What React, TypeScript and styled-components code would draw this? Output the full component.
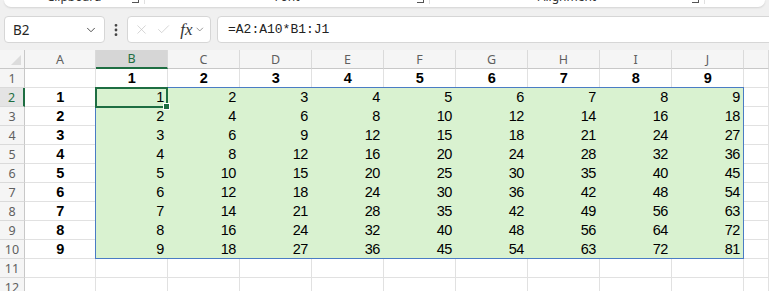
import styled, { createGlobalStyle } from 'styled-components';
import { ChevronDown, EllipsisVertical, X, Check } from 'lucide-react';

const GlobalStyle = createGlobalStyle`
  html, body {
    margin: 0;
    padding: 0;
    background: #ffffff;
    overflow: hidden;
  }
  body {
    font-family: "Noto Sans", "Liberation Sans", sans-serif;
  }
`;

const Page = styled.div`
  display: flex;
  flex-direction: column;
  width: 769px;
  background: #f0f0f0;
  & > * {
    flex: none;
  }
`;

const RibbonEdge = styled.div`
  margin: 0 4px;
  height: 7px;
  background: #ffffff;
  border-radius: 0 0 8px 8px;
  box-shadow: 0 1px 2px rgba(0, 0, 0, 0.12);
  display: flex;
  overflow: hidden;
`;

const RibbonGroup = styled.div<{ $w: number }>`
  width: ${(p) => p.$w}px;
  flex: none;
  display: flex;
  align-items: flex-end;
  justify-content: center;
  border-right: 1px solid #e0e0e0;
  margin-bottom: 3px;
  position: relative;
`;

const GroupLabel = styled.span`
  font-size: 12px;
  line-height: 12px;
  color: #333;
  margin-bottom: 1px;
`;

const Launcher = styled.span`
  position: absolute;
  right: 5px;
  bottom: 1px;
  width: 6px;
  height: 3px;
  border-right: 1px solid #555;
  border-bottom: 1px solid #555;
`;

const FormulaRow = styled.div`
  display: flex;
  align-items: flex-start;
  height: 43px;
  box-sizing: border-box;
  padding: 9px 0 0 4px;
`;

const Box = styled.div`
  box-sizing: border-box;
  height: 27px;
  background: #ffffff;
  border: 1px solid #d6d6d6;
  border-radius: 4px;
  display: flex;
  align-items: center;
`;

const NameBox = styled(Box)`
  width: 101px;
  padding: 0 6px 0 8px;
  justify-content: space-between;
  font-size: 13.5px;
  color: #262626;
`;

const Kebab = styled.div`
  width: 22px;
  height: 27px;
  display: flex;
  align-items: center;
  justify-content: center;
  color: #444;
`;

const Controls = styled(Box)`
  width: 84px;
  padding: 0 4px 0 6px;
  gap: 7px;
  color: #c4c4c4;
`;

const Fx = styled.span`
  font-family: "Liberation Serif", serif;
  font-style: italic;
  font-size: 17px;
  color: #333;
  margin-left: 2px;
  margin-right: -5px;
`;

const FormulaInput = styled(Box)`
  flex: 1;
  margin-left: 6px;
  margin-right: -10px;
  padding-left: 10px;
  font-family: "Liberation Mono", monospace;
  font-size: 13px;
  color: #222;
`;

const Sheet = styled.div`
  display: grid;
  grid-template-columns: 25px 71px repeat(9, 72px) 1fr;
  grid-auto-rows: 19px;
  background: #ffffff;
`;

const Corner = styled.div`
  grid-row: 1;
  grid-column: 1;
  background: #f5f5f5;
  border-right: 1px solid #c8c8c8;
  border-bottom: 1px solid #c8c8c8;
  position: relative;
  &::after {
    content: '';
    position: absolute;
    right: 3px;
    bottom: 3px;
    border-left: 10px solid transparent;
    border-bottom: 10px solid #dcdcdc;
  }
`;

const ColHead = styled.div<{ $col: number; $active?: boolean }>`
  grid-row: 1;
  grid-column: ${(p) => p.$col};
  box-sizing: border-box;
  display: flex;
  align-items: center;
  justify-content: center;
  font-size: 12.5px;
  color: ${(p) => (p.$active ? '#1e6e42' : '#5f5f5f')};
  background: ${(p) => (p.$active ? '#d6d6d6' : '#f5f5f5')};
  border-right: 1px solid #dadada;
  border-bottom: ${(p) => (p.$active ? '2px solid #1e6e42' : '1px solid #c8c8c8')};
`;

const RowHead = styled.div<{ $row: number; $active?: boolean }>`
  grid-row: ${(p) => p.$row};
  grid-column: 1;
  box-sizing: border-box;
  display: flex;
  align-items: center;
  justify-content: center;
  font-size: 12.5px;
  color: ${(p) => (p.$active ? '#1e6e42' : '#5f5f5f')};
  background: ${(p) => (p.$active ? '#e4e4e4' : '#f5f5f5')};
  border-bottom: 1px solid #dadada;
  border-right: ${(p) => (p.$active ? '2px solid #1e6e42' : '1px solid #c8c8c8')};
`;

const Cell = styled.div<{
  $row: number;
  $col: number;
  $align: 'left' | 'center' | 'right';
  $bold?: boolean;
  $fill?: string;
}>`
  grid-row: ${(p) => p.$row};
  grid-column: ${(p) => p.$col};
  box-sizing: border-box;
  display: flex;
  align-items: flex-end;
  justify-content: ${(p) =>
    p.$align === 'right' ? 'flex-end' : p.$align === 'center' ? 'center' : 'flex-start'};
  padding: 0 3px 0 3px;
  font-family: "Liberation Sans", Arial, sans-serif;
  font-size: 14.5px;
  line-height: 17px;
  letter-spacing: -0.4px;
  font-weight: ${(p) => (p.$bold ? 700 : 400)};
  color: #000;
  background: ${(p) => p.$fill ?? '#ffffff'};
  border-right: 1px solid ${(p) => p.$fill ?? '#e1e1e1'};
  border-bottom: 1px solid ${(p) => p.$fill ?? '#e1e1e1'};
`;

const SpillBorder = styled.div`
  grid-row: 3 / 12;
  grid-column: 3 / 12;
  margin: -1px 0 0 -1px;
  border: 1px solid #4a7cc4;
  pointer-events: none;
  z-index: 1;
`;

const ActiveCell = styled.div`
  grid-row: 3 / 4;
  grid-column: 3 / 4;
  margin: -1px 0 -1px -1px;
  border: 2px solid #1e6e42;
  pointer-events: none;
  position: relative;
  z-index: 2;
`;

const FillHandle = styled.span`
  position: absolute;
  right: -4px;
  bottom: -4px;
  width: 5px;
  height: 5px;
  background: #1e6e42;
  border: 1px solid #ffffff;
`;

const letters = ['A', 'B', 'C', 'D', 'E', 'F', 'G', 'H', 'I', 'J', ''];
const rowCount = 12;
const green = '#d9f2d0';

export default function App() {
  const cells = [];
  for (let r = 1; r <= rowCount; r++) {
    const gr = r + 1;
    cells.push(
      <RowHead key={`rh${r}`} $row={gr} $active={r === 2}>
        {r}
      </RowHead>
    );
    // column A holds the row multipliers
    cells.push(
      <Cell key={`a${r}`} $row={gr} $col={2} $align="center" $bold>
        {r >= 2 && r <= 10 ? r - 1 : ''}
      </Cell>
    );
    for (let c = 1; c <= 9; c++) {
      if (r === 1) {
        cells.push(
          <Cell key={`c${r}-${c}`} $row={gr} $col={c + 2} $align="center" $bold>
            {c}
          </Cell>
        );
      } else if (r <= 10) {
        cells.push(
          <Cell key={`c${r}-${c}`} $row={gr} $col={c + 2} $align="right" $fill={green}>
            {(r - 1) * c}
          </Cell>
        );
      } else {
        cells.push(<Cell key={`c${r}-${c}`} $row={gr} $col={c + 2} $align="right" />);
      }
    }
    cells.push(<Cell key={`k${r}`} $row={gr} $col={12} $align="left" />);
  }

  return (
    <>
      <GlobalStyle />
      <Page>
        <RibbonEdge>
          <RibbonGroup $w={140}>
            <GroupLabel>Clipboard</GroupLabel>
            <Launcher />
          </RibbonGroup>
          <RibbonGroup $w={284}>
            <GroupLabel>Font</GroupLabel>
            <Launcher />
          </RibbonGroup>
          <RibbonGroup $w={274}>
            <GroupLabel>Alignment</GroupLabel>
            <Launcher />
          </RibbonGroup>
        </RibbonEdge>
        <FormulaRow>
          <NameBox>
            <span>B2</span>
            <ChevronDown size={14} color="#444" strokeWidth={1.6} />
          </NameBox>
          <Kebab>
            <EllipsisVertical size={16} strokeWidth={2.2} />
          </Kebab>
          <Controls>
            <X size={17} strokeWidth={1.1} />
            <Check size={17} strokeWidth={1.1} />
            <Fx>fx</Fx>
            <ChevronDown size={13} color="#666" strokeWidth={1.4} />
          </Controls>
          <FormulaInput>=A2:A10*B1:J1</FormulaInput>
        </FormulaRow>
        <Sheet>
          <Corner />
          {letters.map((l, i) => (
            <ColHead key={`h${i}`} $col={i + 2} $active={l === 'B'}>
              {l}
            </ColHead>
          ))}
          {cells}
          <SpillBorder />
          <ActiveCell>
            <FillHandle />
          </ActiveCell>
        </Sheet>
      </Page>
    </>
  );
}
